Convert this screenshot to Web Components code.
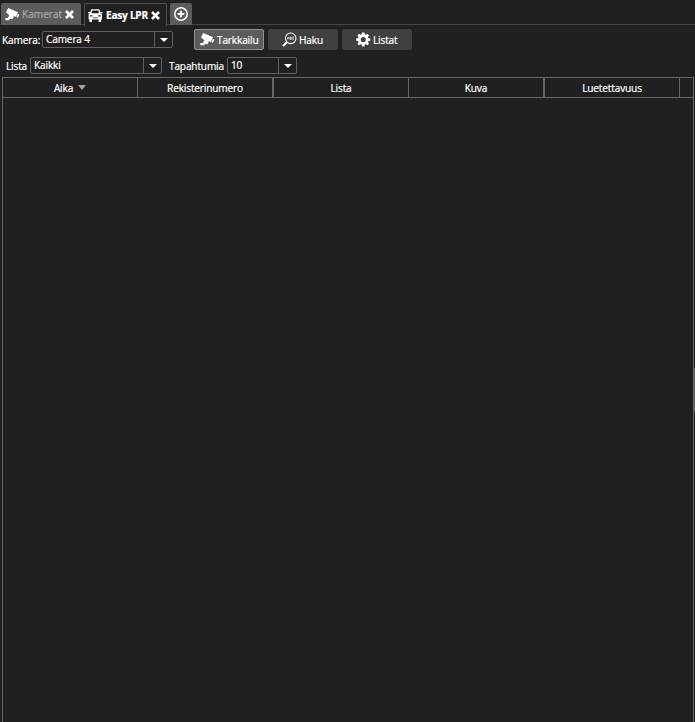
<!DOCTYPE html>
<html lang="fi"><head><meta charset="utf-8"><title>Easy LPR</title>
<style>
html,body{margin:0;height:100%;background:#202020;overflow:hidden}
body{font:10.1px/14px "Open Sans","Noto Sans",sans-serif;letter-spacing:-.15px;color:#fff;-webkit-text-stroke:.2px}
</style></head><body>
<lpr-app></lpr-app>
<script>
const icons={
camera:'<path d="M3.2.9 13 5.2 11 9.8 8.9 9.2 7.6 12.2 4.9 11.8 4.2 13.2H.3V11h2.6L4.2 7.9 1 5.6z"/><path d="m12.8 6.9 1.6.7-1.5 3.2-1.6-.8z"/>',
car:'<path fill-rule="evenodd" d="M3.2 1.2h8.1L12.5 5.2l1.5 1v5.3h-.9V14h-2.5v-2.5H4V14H1.5v-2.5H.6V6.2L2 5.2zM4.2 2.5 3.5 5.3h7.6l-.8-2.8zM2 7.2v1.3h2.4V7.2zm8.2 0v1.3h2.4V7.2zM4.8 9.4v.8h5V9.4z"/><path d="M0 4h2v1.2H0zM12.5 4h2v1.2h-2z"/>',
search:'<g fill="none" stroke="#fff"><circle cx="8.7" cy="6.3" r="5.3" stroke-width="1.1"/><path d="M4.8 10.3 1 14" stroke-width="2"/><path d="m5.2 7.4 1-2.3 1 2.3M8.2 7.4V5.1h1v2.3h-1M12 5.2h-1.2v2.1H12" stroke-width=".8"/></g>',
gear:'<path transform="translate(.2 0) scale(.94)" fill-rule="evenodd" d="M6.2.5h2.6l.4 2 1.2.5L12 1.9 13.7 3.6 12.5 5.2l.5 1.2 2 .4v2.4l-2 .4-.5 1.2 1.2 1.6-1.7 1.7-1.6-1.2-1.2.5-.4 2H6.2l-.4-2-1.2-.5L3 14.1l-1.7-1.7 1.2-1.6L2 9.6 0 9.2V6.8l2-.4.5-1.2L1.3 3.6 3 1.9 4.6 3l1.2-.5zM7.5 5.3a2.7 2.7 0 1 0 0 5.4 2.7 2.7 0 0 0 0-5.4z"/>',
close:'<path d="m3 4 7 7m0-7-7 7" stroke="#fff" stroke-width="2.6" fill="none"/>',
plus:'<circle cx="7" cy="7" r="6.2" fill="none" stroke="#fff" stroke-width="1.5"/><path d="M7 3.7v6.6M3.7 7h6.6" stroke="#fff" stroke-width="2"/>'
};
const define=(name,build)=>customElements.define(name,class extends HTMLElement{
 connectedCallback(){ if(!this.shadowRoot) this.attachShadow({mode:'open'}).innerHTML=build(this); }
});
define('lpr-icon',e=>`<style>:host{display:block;width:15px;height:15px;flex:none}svg{display:block;width:100%;height:100%;fill:#fff}</style><svg viewBox="0 0 15 15">${icons[e.getAttribute('name')]}</svg>`);
define('lpr-tab',()=>`<style>:host{display:flex;box-sizing:border-box;align-items:center;height:22px;background:#5c5c5c;color:#aaa;border-radius:2px 2px 0 0;white-space:nowrap}
:host([active]){background:#202020;color:#fff;border:1px solid #505050;border-bottom:0;font-weight:700}
</style><slot></slot>`);
define('lpr-select',()=>`<style>:host{display:flex;box-sizing:border-box;height:17px;border:1px solid #606060;border-radius:2px;line-height:15px}
span{flex:1;padding-left:3px}i{width:17px;border-left:1px solid #606060;display:grid;place-items:center}i:after{content:"";border:4px solid transparent;border-top-color:#fff;border-bottom:0}</style><span><slot></slot></span><i></i>`);
define('lpr-button',()=>`<style>:host{display:flex;box-sizing:border-box;width:70px;height:21px;align-items:center;gap:2px;background:#404040;border:1px solid #404040;border-radius:2px;white-space:nowrap}
:host([active]){background:#5c5c5c;border-color:#909090}</style><slot></slot>`);
define('lpr-table',()=>`<style>:host{display:block;box-sizing:border-box;border:1px solid #686868;border-bottom:0}
.h{display:grid;grid-template-columns:135px 136px 135px 136px 135px 1fr;height:19px;border-bottom:1px solid #686868}
.h div{box-sizing:border-box;border-right:1px solid #686868;display:flex;align-items:center;justify-content:center;gap:5px}
.h div.w{border-right-width:2px}
.h div:last-child{border:0}
i{border:4.5px solid transparent;border-top:5px solid #a0a0a0;border-bottom:0}</style>
<div class="h"><div>Aika<i></i></div><div class="w">Rekisterinumero</div><div>Lista</div><div class="w">Kuva</div><div>Luetettavuus</div><div></div></div>`);
define('lpr-app',()=>`<style>
:host{display:flex;flex-direction:column;height:722px;width:695px;overflow:hidden}
.tabs{display:flex;height:25px;box-sizing:border-box;padding:3px 0 0 1px;background:linear-gradient(#444,#444) 0 24px/100% 1px no-repeat}
.t1{width:80px;padding-left:4px}.t2{width:83px;margin-left:3px;padding-left:3px;height:23px}
.t3{width:22px;margin-left:3px;justify-content:center}
.t1 span{width:40px;margin-left:2px;letter-spacing:0}.t1 lpr-icon:last-child{margin-left:1px}.t2 span{width:43px;margin-left:3px;letter-spacing:-.25px}
.row{display:flex;align-items:center}
.a{height:21px;margin-top:4px;padding-left:2px}.b{height:17px;margin-top:7px;padding-left:6px}
.body{display:flex;flex:1;margin-top:3px;padding-left:2px}
lpr-table{width:692px}
.bar{width:1px;height:43px;margin-top:291px;background:#606060}
</style>
<div class="tabs"><lpr-tab class="t1"><lpr-icon name="camera"></lpr-icon><span>Kamerat</span><lpr-icon name="close"></lpr-icon></lpr-tab>
<lpr-tab active class="t2"><lpr-icon name="car"></lpr-icon><span>Easy LPR</span><lpr-icon name="close"></lpr-icon></lpr-tab>
<lpr-tab class="t3"><lpr-icon name="plus"></lpr-icon></lpr-tab></div>
<div class="row a"><span style="width:40px">Kamera:</span><lpr-select style="width:131px">Camera 4</lpr-select>
<lpr-button active style="margin-left:21px;padding-left:5px"><lpr-icon name="camera"></lpr-icon><span>Tarkkailu</span></lpr-button>
<lpr-button style="margin-left:4px;padding-left:13px"><lpr-icon name="search"></lpr-icon><span>Haku</span></lpr-button>
<lpr-button style="margin-left:4px;padding-left:13px"><lpr-icon name="gear"></lpr-icon><span>Listat</span></lpr-button></div>
<div class="row b"><span style="width:24px">Lista</span><lpr-select style="width:132px">Kaikki</lpr-select>
<span style="margin-left:7px;width:58px">Tapahtumia</span><lpr-select style="width:70px">10</lpr-select></div>
<div class="body"><lpr-table></lpr-table><div class="bar"></div></div>`);
</script></body></html>
